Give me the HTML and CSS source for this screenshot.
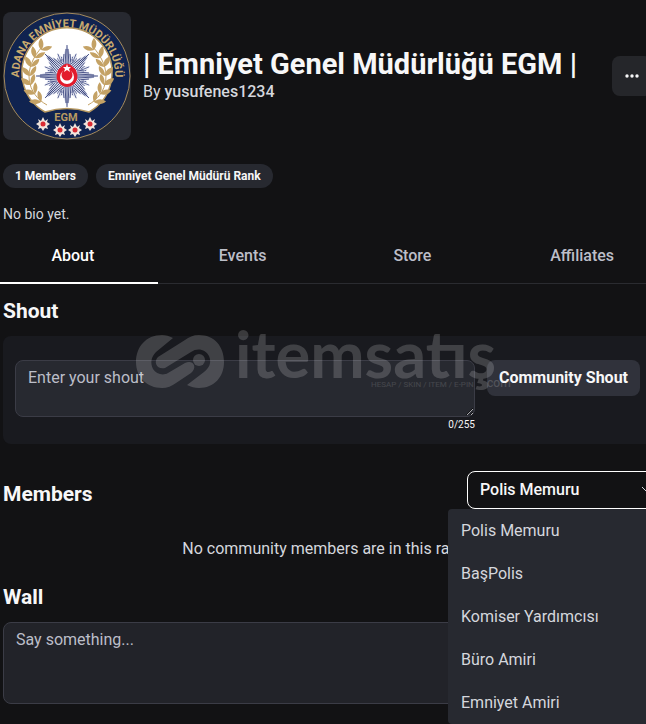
FILE: index.html
```html
<!DOCTYPE html>
<html lang="en">
<head>
  <meta charset="UTF-8">
  <meta name="viewport" content="width=device-width, initial-scale=1.0">
  <title>Emniyet Genel Müdürlüğü EGM</title>
  <link rel="stylesheet" href="styles.css">
</head>
<body>
<main class="page">

  <!-- Group header -->
  <header class="group-header">
    <svg class="emblem" viewBox="0 0 128 128" role="img" aria-label="EGM emblem">
      <defs>
        <path id="ring" d="M17.500 75 A48 48 0 1 1 110.500 75"/>
        <g id="leaf"><path d="M0 0C-6-1-8-5-8-9C-3-8 0-5 0 0ZM0 0C5-2 7-6 6-10C2-8 0-5 0 0Z"/></g>
        <g id="branch" fill="#c4a265">
          <path d="M44 93C24 82 18 57 40 34" fill="none" stroke="#c4a265"/>
          <use href="#leaf" transform="translate(38 90) rotate(-45)"/>
          <use href="#leaf" transform="translate(32 82) rotate(-30)"/>
          <use href="#leaf" transform="translate(28 73) rotate(-15)"/>
          <use href="#leaf" transform="translate(27 64)"/>
          <use href="#leaf" transform="translate(28 55) rotate(14)"/>
          <use href="#leaf" transform="translate(32 46) rotate(30)"/>
          <use href="#leaf" transform="translate(38 38) rotate(42)"/>
        </g>
        <g id="ray"><path d="M0-31L7-12L0 0L-7-12Z" fill="#dcdfed"/><path d="M0-31V-10M-1-27L-2-10M1-27L2-10M-3-22L-4-10M3-22L4-10M-5-17L-6-10M5-17L6-10" stroke="#24306e" stroke-width=".8"/></g>
        <g id="ray2"><path d="M0-25L7-12L0 0L-7-12Z" fill="#eceef5"/><path d="M0-24V-10M-2-20L-2-9M2-20L2-9M-4-16L-4-9M4-16L4-9" stroke="#3a4682" stroke-width=".7"/></g>
        <g id="medal">
          <path d="M0-7L2-3L5-5L4-2L7 0L4 2L5 5L2 4L0 7L-2 4L-5 5L-4 2L-7 0L-4-2L-5-5L-2-3Z" fill="#f1e4dc"/>
          <circle r="2.500" fill="#d92a32"/>
        </g>
      </defs>
      <circle cx="64" cy="64" r="63" fill="#102350" stroke="#a58b5c"/>
      <path d="M42 100A45 45 0 1 1 86 100Q64 93 42 100Z" fill="#fff" stroke="#b99a61" stroke-width="1.500"/>
      <use href="#branch"/>
      <use href="#branch" transform="translate(129 0) scale(-1 1)"/>
      <g transform="translate(64 64)">
        <use href="#ray2" transform="rotate(22.500)"/><use href="#ray2" transform="rotate(67.500)"/>
        <use href="#ray2" transform="rotate(112.500)"/><use href="#ray2" transform="rotate(157.500)"/>
        <use href="#ray2" transform="rotate(202.500)"/><use href="#ray2" transform="rotate(247.500)"/>
        <use href="#ray2" transform="rotate(292.500)"/><use href="#ray2" transform="rotate(337.500)"/>
        <use href="#ray"/><use href="#ray" transform="rotate(45)"/>
        <use href="#ray" transform="rotate(90)"/><use href="#ray" transform="rotate(135)"/>
        <use href="#ray" transform="rotate(180)"/><use href="#ray" transform="rotate(225)"/>
        <use href="#ray" transform="rotate(270)"/><use href="#ray" transform="rotate(315)"/>
        <path d="M-5-10Q0-15 5-10L9-6Q13 4 6 9Q0 13-6 9Q-13 4-9-6Z" fill="#e31b2c"/>
        <circle cy="1" r="7" fill="#fff"/><circle cy="-1" r="5.500" fill="#e31b2c"/>
        <path d="M0-12L1-9H4L2-7L3-4L0-6L-3-4L-2-7L-4-9H-1Z" fill="#fff"/>
      </g>
      <text class="emblem-ring"><textPath href="#ring" startOffset="50%">ADANA EMNİYET MÜDÜRLÜĞÜ</textPath></text>
      <text class="emblem-egm" x="63" y="109">EGM</text>
      <use href="#medal" x="40" y="112"/><use href="#medal" x="57" y="118"/>
      <use href="#medal" x="72" y="118"/><use href="#medal" x="87" y="112"/>
    </svg>
    <div class="group-title">
      <h1>| Emniyet Genel Müdürlüğü EGM |</h1>
      <p>By <a href="#">yusufenes1234</a></p>
    </div>
    <button class="more" type="button" aria-label="More">
      <svg width="14" height="4" viewBox="0 0 14 4" fill="#f7f7f8"><circle cx="2" cy="2" r="1.700"/><circle cx="7" cy="2" r="1.700"/><circle cx="12" cy="2" r="1.700"/></svg>
    </button>
  </header>

  <div class="badges">
    <span class="badge">1 Members</span>
    <span class="badge">Emniyet Genel Müdürü Rank</span>
  </div>
  <p class="bio">No bio yet.</p>

  <nav class="tabs">
    <a class="active" href="#">About</a>
    <a href="#">Events</a>
    <a href="#">Store</a>
    <a href="#">Affiliates</a>
  </nav>

  <!-- Shout -->
  <section>
    <h2><label for="shout">Shout</label></h2>
    <div class="shout-box">
      <div class="shout-field">
        <textarea id="shout" placeholder="Enter your shout" maxlength="255"></textarea>
        <span class="counter">0/255</span>
      </div>
      <button class="shout-button" type="button">Community Shout</button>
      <svg class="watermark" viewBox="0 0 376 60" aria-hidden="true">
        <path d="M37 3C33 1 30 0 26 0C10 0 0 12 0 27C0 42 11 53 26 53C31 53 36 51 40 48L55 38C62 32 57 24 49 28L32 38C27 41 20 39 17 34C14 28 15 22 20 17Z"/>
        <path d="M51 50C55 52 59 53 63 53C78 53 88 42 88 27C88 11 78 0 63 0C57 0 53 2 49 5L22 22C17 27 21 35 29 33L55 17C62 12 70 15 73 21C76 28 73 33 68 37Z"/>
        <circle cx="63" cy="25" r="6"/>
        <text class="mark-name" x="99" y="43">itemsatış</text>
        <text class="mark-line" x="235" y="52">HESAP / SKIN / ITEM / E-PIN</text>
        <text class="mark-com" x="351" y="52">com</text>
      </svg>
    </div>
  </section>

  <!-- Members -->
  <section>
    <div class="members-head">
      <h2><label for="rank">Members</label></h2>
      <div class="rank">
        <select id="rank">
          <option>Polis Memuru</option>
          <option>BaşPolis</option>
          <option>Komiser Yardımcısı</option>
          <option>Büro Amiri</option>
          <option>Emniyet Amiri</option>
        </select>
        <svg class="chevron" width="14" height="8" viewBox="0 0 14 8" fill="none" stroke="#d5d7dd"><path d="M1 1L7 7L13 1"/></svg>
        <div class="rank-menu">
          <button type="button">Polis Memuru</button>
          <button type="button">BaşPolis</button>
          <button type="button">Komiser Yardımcısı</button>
          <button type="button">Büro Amiri</button>
          <button type="button">Emniyet Amiri</button>
        </div>
      </div>
    </div>
    <p class="empty">No community members are in this rank.</p>
  </section>

  <!-- Wall -->
  <section>
    <h2><label for="wall">Wall</label></h2>
    <textarea id="wall" class="wall" placeholder="Say something..."></textarea>
  </section>

</main>
</body>
</html>
```
FILE: styles.css
```css
* {
  box-sizing: border-box;
}
body {
  margin: 0;
  background: #121214;
  color: #f7f7f8;
  font-family: Roboto, "Liberation Sans", sans-serif;
  font-size: 16px;
  line-height: 24px;
}
h1, h2, p {
  margin: 0;
}
a {
  color: inherit;
  text-decoration: none;
}
button, select, textarea {
  font: inherit;
  color: inherit;
}
.page {
  min-height: 100vh;
  padding: 12px 0 20px 3px;
  overflow: hidden;
}

/* header */
.group-header {
  display: flex;
  align-items: center;
  gap: 12px;
}
.emblem {
  width: 128px;
  height: 128px;
  flex: none;
  border-radius: 8px;
  background: #272930;
}
.emblem-ring {
  fill: #c9aa6e;
  font-size: 11px;
  font-weight: 700;
  text-anchor: middle;
}
.emblem-egm {
  fill: #b99a61;
  font-size: 11px;
  font-weight: 700;
  text-anchor: middle;
}
.group-title {
  flex: 1;
  white-space: nowrap;
}
.group-title h1 {
  font-size: 29px;
  line-height: 32px;
}
.group-title p {
  color: #d5d7dd;
}
.group-title a {
  font-weight: 500;
}
.more {
  width: 40px;
  height: 40px;
  margin-right: -6px;
  padding: 0;
  border: 0;
  border-radius: 8px;
  background: #25262a;
}
.more svg {
  display: block;
  margin: auto;
}

.badges {
  display: flex;
  gap: 8px;
  margin-top: 24px;
}
.badge {
  padding: 0 12px;
  border-radius: 13px;
  background: #272930;
  font-size: 12px;
  font-weight: 700;
}
.bio {
  margin-top: 14px;
  color: #d5d7dd;
  font-size: 14px;
}

/* tabs */
.tabs {
  display: grid;
  grid-template-columns: repeat(4, 1fr);
  margin: 4px -21px 15px -15px;
  border-bottom: 1px solid #2a2b30;
}
.tabs a {
  padding: 14px 0;
  color: #bcbec8;
  font-weight: 500;
  text-align: center;
}
.tabs .active {
  margin-bottom: -1px;
  border-bottom: 2px solid #fff;
  color: #fff;
}

h2 {
  font-size: 21px;
  line-height: 24px;
}

/* shout */
.shout-box {
  position: relative;
  display: flex;
  align-items: flex-start;
  gap: 12px;
  margin-top: 13px;
  padding: 24px 6px 11px 12px;
  border-radius: 8px 0 0 8px;
  background: #191a1f;
}
.shout-field {
  display: flex;
  flex: 1;
  flex-direction: column;
}
textarea {
  display: block;
  width: 100%;
  padding: 5px 12px;
  border: 1px solid #3b3c46;
  border-radius: 8px;
  background: #272930;
}
textarea::placeholder {
  color: #bcbec8;
}
#shout {
  height: 57px;
}
.counter {
  align-self: flex-end;
  font-size: 10px;
  line-height: 16px;
}
.shout-button {
  height: 36px;
  padding: 0 12px;
  border: 0;
  border-radius: 8px;
  background: #30323b;
  font-weight: 700;
}
.watermark {
  position: absolute;
  top: -1px;
  left: 133px;
  width: 376px;
  height: 60px;
  overflow: visible;
  fill: #fff;
  opacity: .17;
  pointer-events: none;
}
.mark-name {
  font-family: Lato, sans-serif;
  font-size: 65px;
  font-weight: 700;
}
.mark-line {
  font-size: 8px;
  opacity: .8;
}
.mark-com {
  font-size: 12px;
}

/* members */
.members-head {
  display: flex;
  align-items: center;
  justify-content: space-between;
  margin-top: 27px;
}
.members-head h2 {
  padding-top: 8px;
}
.rank {
  position: relative;
  width: 200px;
  margin-right: -21px;
}
.rank select {
  display: block;
  width: 100%;
  height: 38px;
  padding: 0 12px;
  appearance: none;
  border: 1px solid #fff;
  border-radius: 8px;
  background: #121214;
  font-weight: 500;
}
.chevron {
  position: absolute;
  top: 15px;
  right: 12px;
}
.rank-menu {
  position: absolute;
  top: 38px;
  right: 0;
  z-index: 1;
  display: flex;
  flex-direction: column;
  width: 219px;
  border-radius: 4px;
  background: #272930;
}
.rank-menu button {
  height: 43px;
  padding: 0 13px;
  border: 0;
  background: none;
  color: #d5d7dd;
  text-align: left;
}
.empty {
  margin: 28px 0 24px;
  padding-left: 4px;
  color: #d5d7dd;
  text-align: center;
}
.wall {
  height: 82px;
  margin-top: 13px;
  background: #222329;
  resize: none;
}
```
